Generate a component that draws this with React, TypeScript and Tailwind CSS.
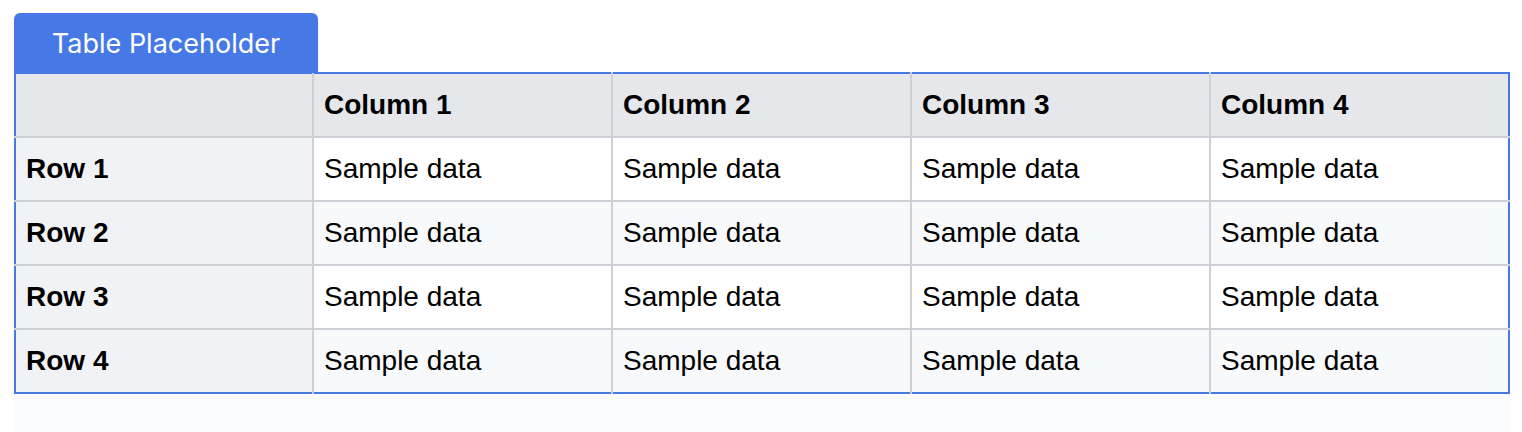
import * as React from "react";

const columns = ["Column 1", "Column 2", "Column 3", "Column 4"];
const rows = ["Row 1", "Row 2", "Row 3", "Row 4"];

export default function App() {
  return (
    <div className="bg-white h-[432px] px-[14px] pt-[13px] overflow-hidden">
      {/* tab */}
      <div
        className="inline-flex items-center justify-center h-[60px] w-[304px] pt-[2px] rounded-t-[6px] bg-[#4679e6] text-white text-[27px] -mb-px"
        style={{ fontFamily: "Inter, 'Noto Sans', sans-serif" }}
      >
        Table Placeholder
      </div>

      <div className="w-[1496px] bg-[#fafbfd] pb-[38px]">
        <table
          className="w-full table-fixed border-collapse border-2 border-[#4679e6] text-[28px] text-black"
          style={{ fontFamily: "'Liberation Sans', Arial, sans-serif" }}
        >
          <thead>
            <tr className="bg-[#e5e7eb] h-[64px]">
              <th className="w-[298px] border-r-2 border-b-2 border-[#cdd0d6]"></th>
              {columns.map((c, i) => (
                <th
                  key={c}
                  className={`text-left font-bold px-[10px] border-b-2 border-[#cdd0d6] ${
                    i < columns.length - 1 ? "border-r-2" : ""
                  }`}
                >
                  {c}
                </th>
              ))}
            </tr>
          </thead>
          <tbody>
            {rows.map((r, ri) => (
              <tr
                key={r}
                className={`h-[64px] ${ri % 2 === 0 ? "bg-white" : "bg-[#f8f9fb]"}`}
              >
                <td
                  className={`bg-[#f1f2f6] font-bold px-[10px] border-r-2 border-[#cdd0d6] ${
                    ri < rows.length - 1 ? "border-b-2" : ""
                  }`}
                >
                  {r}
                </td>
                {columns.map((c, ci) => (
                  <td
                    key={c}
                    className={`px-[10px] border-[#cdd0d6] ${
                      ci < columns.length - 1 ? "border-r-2" : ""
                    } ${ri < rows.length - 1 ? "border-b-2" : ""}`}
                  >
                    Sample data
                  </td>
                ))}
              </tr>
            ))}
          </tbody>
        </table>
      </div>
    </div>
  );
}
